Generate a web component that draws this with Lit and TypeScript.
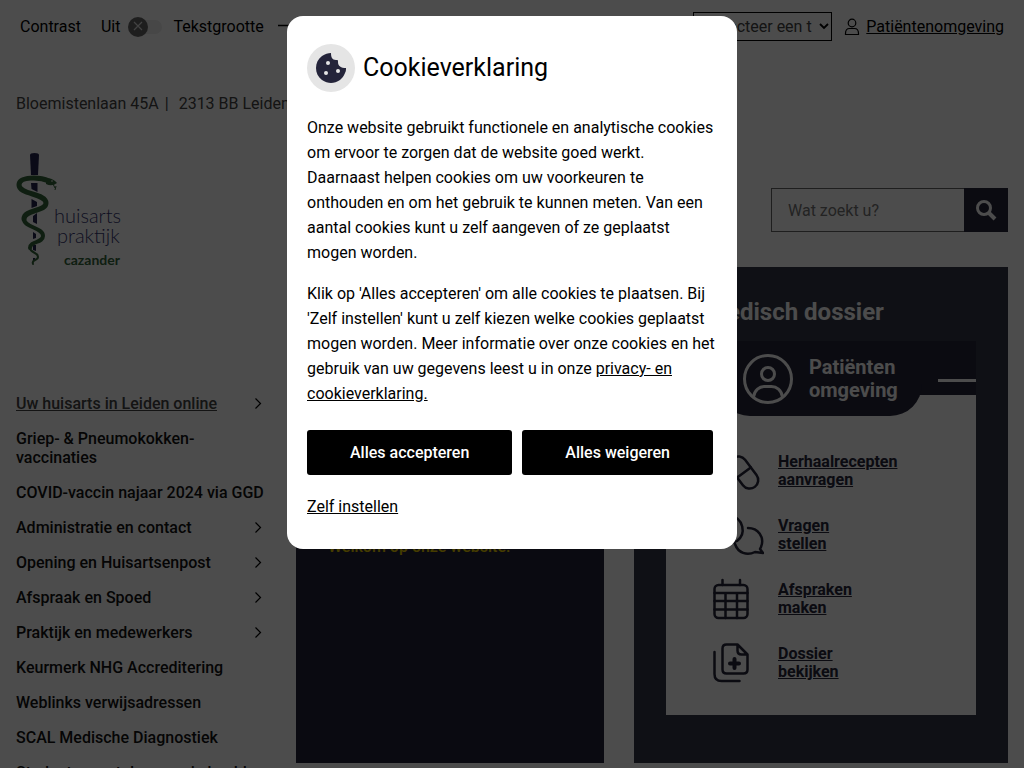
import { LitElement, html, css, svg, nothing } from "lit";
import { customElement } from "lit/decorators.js";

const menu: { label: string; sub?: boolean; active?: boolean }[] = [
  { label: "Uw huisarts in Leiden online", sub: true, active: true },
  { label: "Griep- & Pneumokokken-vaccinaties" },
  { label: "COVID-vaccin najaar 2024 via GGD" },
  { label: "Administratie en contact", sub: true },
  { label: "Opening en Huisartsenpost", sub: true },
  { label: "Afspraak en Spoed", sub: true },
  { label: "Praktijk en medewerkers", sub: true },
  { label: "Keurmerk NHG Accreditering" },
  { label: "Weblinks verwijsadressen" },
  { label: "SCAL Medische Diagnostiek" },
  { label: "Studenten met de naam in beeld" },
];

const pill = svg`<g transform="rotate(-37 32 22.5)"><rect x="23.5" y="4.5" width="17" height="36" rx="8.5"/><path d="M23.5 22.5h17"/></g>`;
const chat = svg`<path d="M19 2a14 14 0 0 1 6 25q-6 3-12 1l-8 1 2-6A14 14 0 0 1 19 2z"/><path d="M36 14c10 0 17 9 13 19q-1 2-1 2l3 4-8-1c-8 4-17 1-20-8"/>`;
const calendar = svg`<rect x="2.5" y="7" width="33" height="33" rx="4"/><path d="M10.500 2v5M28 2v5M2.500 15h33M2.500 23h33M2.500 31.500h33M13.500 15v25M25 15v25"/>`;
const dossier = svg`<path d="M2.500 10v22q0 7 7 7h18M14.500 2.500h11l10 10v15q0 4-4 4h-17q-4 0-4-4v-21q0-4 4-4zM25.500 2.500v6q0 4 4 4h6"/><path d="M22.500 17v9M18 21.500h9" stroke-width="4"/>`;

const services = [
  { icon: pill, first: "Herhaalrecepten", second: "aanvragen" },
  { icon: chat, first: "Vragen", second: "stellen" },
  { icon: calendar, first: "Afspraken", second: "maken" },
  { icon: dossier, first: "Dossier", second: "bekijken" },
];

@customElement("top-bar")
class TopBar extends LitElement {
  static styles = css`
    :host { display: block; color: #000; }
    .bar { display: flex; justify-content: space-between; align-items: center; height: 53px; padding: 0 20px; }
    .group { display: flex; align-items: center; }
    .contrast { display: flex; align-items: center; gap: 20px; }
    .switch { display: flex; align-items: center; gap: 8px; margin-right: 11px; }
    .toggle { appearance: none; width: 34px; height: 14px; margin: 0; border-radius: 7px; background: #eee; }
    .track { display: grid; align-items: center; }
    .track > * { grid-area: 1 / 1; }
    .knob { width: 20px; height: 20px; border-radius: 10px; background: #666; pointer-events: none; }
    .knob svg { display: block; }
    .size { display: flex; align-items: center; gap: 14px; }
    .size button { border: 0; padding: 0; background: none; font: inherit; line-height: 20px; }
    .language { box-sizing: border-box; width: 139px; height: 29px; padding: 0 19px 0 12px; border: 1px solid #000; border-radius: 0; background: #fff; color: #444; font: 16px Roboto, sans-serif; appearance: none; }
    .select { display: grid; align-items: center; margin-right: 12px; }
    .select > * { grid-area: 1 / 1; }
    .select svg { justify-self: end; margin-right: 3px; pointer-events: none; }
    .portal { display: flex; align-items: center; gap: 6px; color: #000; text-decoration: none; }
    .portal svg { display: block; }
    .portal span { text-decoration: underline; }
  `;
  render() {
    return html`<div class="bar">
      <div class="group">
        <div class="contrast">
          <span>Contrast</span>
          <label class="switch">Uit
            <span class="track"><input class="toggle" type="checkbox" /><span class="knob"><svg width="20" height="20" fill="none" stroke="#ddd" stroke-width="1.200"><path d="M6 5l8 8M14 5l-8 8" /></svg></span></span>
          </label>
        </div>
        <div class="size"><span>Tekstgrootte</span><button aria-label="Kleiner"><svg width="14" height="14" stroke="#000" stroke-width="1.500"><path d="M0 7.500h14" /></svg></button></div>
      </div>
      <div class="group">
        <div class="select">
          <select class="language" aria-label="Taal"><option>Selecteer een taal</option></select>
          <svg width="10" height="7" fill="none" stroke="#000" stroke-width="1.800"><path d="M1 1l4 4 4-4" /></svg>
        </div>
        <a class="portal" href="#">
          <svg width="16" height="18" fill="none" stroke="#000" stroke-width="1.200"><circle cx="8" cy="5" r="3.800" /><path d="M1.500 16.500v-1q0-5 4-5h5q4 0 4 5v1z" /></svg>
          <span>Patiëntenomgeving</span>
        </a>
      </div>
    </div>`;
  }
}

@customElement("practice-logo")
class PracticeLogo extends LitElement {
  static styles = css`
    :host { display: block; }
    svg { display: block; }
    .name { font: 300 20px Lato, sans-serif; fill: #35356f; }
    .owner { font: 700 14px Lato, sans-serif; fill: #34663a; }
  `;
  render() {
    return html`<svg width="110" height="116" viewBox="0 0 110 116" role="img" aria-label="Huisartspraktijk Cazander">
      <g fill="#22224f">
        <path d="M14 3q0-2 4.500-2t4.500 2l-1 20h-7z" />
        <path d="M15 31h6.500v9l-6-3zM15.500 47l5.500 3v4l-5.500 2zM17 64l4-3v11l-4-2zM17 80l3 2v4l-3 1zM17 93h3v6l-3-1zM17 106h2v3h-2z" />
      </g>
      <g fill="none" stroke="#34663a" stroke-linecap="round">
        <path d="M33 29C24 25 3 24 3 33C3 43 30 41 30 51C30 60 8 57 8 67" stroke-width="5" />
        <path d="M8 67C8 76 27 75 27 84C27 91 14 89 14 96" stroke-width="4" />
        <path d="M14 96C14 101 22 100 22 105C22 109 15 107 17 112" stroke-width="2" />
      </g>
      <path d="M30 27q6-2 11 4-5 4-11 1z" fill="#34663a" />
      <path d="M37 32l2 4M40 34l-1 4" stroke="#34663a" />
      <circle cx="36" cy="29" r="0.800" fill="#fff" />
      <text class="name" x="38" y="71">huisarts</text>
      <text class="name" x="41" y="91">praktijk</text>
      <text class="owner" x="48" y="113">cazander</text>
    </svg>`;
  }
}

@customElement("side-menu")
class SideMenu extends LitElement {
  static styles = css`
    :host { display: block; }
    .list { list-style: none; margin: 0; padding: 0; }
    .item { display: flex; align-items: center; justify-content: space-between; padding: 8px 0; }
    .link { color: #111; font-weight: 500; line-height: 19px; text-decoration: none; }
    .active { color: #444; text-decoration: underline; }
    .arrow { flex: none; margin-right: 4px; }
  `;
  render() {
    return html`<nav><ul class="list">${menu.map((m) => html`<li class="item">
      <a class="link ${m.active ? "active" : ""}" href="#">${m.label}</a>
      ${m.sub ? html`<svg class="arrow" width="8" height="12" fill="none" stroke="#000" stroke-width="1.200"><path d="M1.500 0.500l5 5-5 5" /></svg>` : nothing}
    </li>`)}</ul></nav>`;
  }
}

@customElement("dossier-panel")
class DossierPanel extends LitElement {
  static styles = css`
    :host { display: block; }
    .panel { background: #323848; padding: 29px 32px 48px; }
    .title { margin: 0 0 13px; padding: 0 40px; color: #fff; font-size: 24px; line-height: 32px; font-weight: 700; }
    .card { background: #fff; }
    .band { background: #25253a; height: 54px; display: flex; align-items: flex-start; justify-content: space-between; }
    .badge { box-sizing: border-box; display: flex; align-items: center; gap: 15px; height: 75px; padding: 0 24px; margin-left: 52px; background: #25253a; border-radius: 0 0 32px 32px; color: #fff; font-size: 20px; line-height: 23px; font-weight: 700; }
    .line { width: 38px; height: 3px; margin-top: 38px; background: #fff; }
    .services { list-style: none; margin: 0; padding: 53px 16px 29px 46px; display: grid; gap: 18px; }
    .service { color: #25253a; font-weight: 700; font-size: 16px; line-height: 18px; display: flex; align-items: center; gap: 14px; height: 46px; }
    .service svg { flex: none; }
  `;
  render() {
    return html`<section class="panel">
      <h2 class="title">Medisch dossier</h2>
      <div class="card">
        <div class="band">
          <div class="badge">
            <svg width="52" height="52" fill="none" stroke="#fff" stroke-width="3"><circle cx="26" cy="26" r="23.500" /><circle cx="26" cy="21" r="6.500" /><path d="M11.500 44c1-7 6-10.500 11-10.500h7c5 0 10 3.500 11 10.500" /></svg>
            <span>Patiënten<br />omgeving</span>
          </div>
          <span class="line"></span>
        </div>
        <ul class="services">${services.map((s) => html`<li>
          <a class="service" href="#">
            <svg width="52" height="42" fill="none" stroke="#25253a" stroke-width="2.500" stroke-linecap="round" stroke-linejoin="round">${s.icon}</svg>
            <span>${s.first}<br />${s.second}</span>
          </a></li>`)}</ul>
      </div>
    </section>`;
  }
}

@customElement("cookie-dialog")
class CookieDialog extends LitElement {
  static styles = css`
    :host { position: absolute; inset: 0; display: flex; justify-content: center; align-items: flex-start; padding: 16px; background: rgba(0, 0, 0, 0.7); }
    .dialog { box-sizing: border-box; width: 100%; max-width: 450px; padding: 28px 20px 30px; border-radius: 16px; background: #fff; color: #000; }
    .head { display: flex; align-items: center; gap: 8px; }
    .icon { display: grid; place-items: center; width: 48px; height: 48px; border-radius: 24px; background: #e5e5e5; }
    .title { margin: 0; font-size: 25px; line-height: 32px; font-weight: 400; }
    .text { margin: 0; line-height: 25px; }
    .copy { display: grid; gap: 16px; margin: 23px 0 24px; }
    .actions { display: flex; gap: 10px; }
    .button { height: 45px; padding: 0 43px; border: 0; border-radius: 3px; background: #000; color: #fff; font: 500 16px Roboto, sans-serif; white-space: nowrap; }
    .settings { display: block; margin-top: 20px; padding: 0; border: 0; background: none; color: #000; font: inherit; line-height: 24px; text-decoration: underline; }
    a { color: inherit; }
  `;
  render() {
    return html`<section class="dialog" role="dialog" aria-labelledby="title">
      <div class="head">
        <span class="icon"><svg width="30" height="30"><path fill="#24243a" d="M15 0c0 4 1 7 5 7 2 0 2 0 2 2 0 4 3 6 8 6 0 2 0 3-1 5-1 3-3 5-5 7-3 2-6 3-9 3s-6-1-9-3c-4-3-6-7-6-12S2 6 6 3c3-2 6-3 9-3z" /><g fill="#e5e5e5"><circle cx="12" cy="10" r="2" /><circle cx="10" cy="20" r="2" /><circle cx="22" cy="18" r="2" /></g></svg></span>
        <h1 class="title" id="title">Cookieverklaring</h1>
      </div>
      <div class="copy">
        <p class="text">Onze website gebruikt functionele en analytische cookies om ervoor te zorgen dat de website goed werkt. Daarnaast helpen cookies om uw voorkeuren te onthouden en om het gebruik te kunnen meten. Van een aantal cookies kunt u zelf aangeven of ze geplaatst mogen worden.</p>
        <p class="text">Klik op 'Alles accepteren' om alle cookies te plaatsen. Bij 'Zelf instellen' kunt u zelf kiezen welke cookies geplaatst mogen worden. Meer informatie over onze cookies en het gebruik van uw gegevens leest u in onze <a href="#">privacy- en cookieverklaring.</a></p>
      </div>
      <div class="actions"><button class="button">Alles accepteren</button><button class="button">Alles weigeren</button></div>
      <button class="settings">Zelf instellen</button>
    </section>`;
  }
}

@customElement("app-root")
class AppRoot extends LitElement {
  static styles = css`
    :host { display: block; position: relative; height: 100vh; overflow: hidden; background: #fff; color: #333; font: 16px/20px Roboto, sans-serif; }
    .address { display: flex; gap: 6px; padding: 41px 16px 0; color: #444; }
    .city { padding-left: 4px; }
    .header { display: flex; justify-content: space-between; align-items: flex-start; padding: 38px 16px 0; }
    .search { display: flex; margin-top: 36px; width: 237px; height: 44px; }
    .field { box-sizing: border-box; flex: 1; min-width: 0; padding: 0 16px; border: 1px solid #666; border-right: 0; border-radius: 0; font: 16px Roboto, sans-serif; }
    .field::placeholder { color: #757575; opacity: 1; }
    .go { display: grid; place-items: center; width: 44px; padding: 0; border: 0; background: #25253a; }
    .columns { display: grid; grid-template-columns: 250fr 308fr 374fr; gap: 30px; padding: 0 16px; margin-top: -1px; }
    .menu { margin-top: 119px; height: 0; }
    .welcome { background: #232339; padding: 269px 32px 0; color: #e6c800; font-weight: 500; }
    .welcome p { margin: 0; line-height: 22px; }
  `;
  render() {
    return html`
      <top-bar></top-bar>
      <div class="address"><span>Bloemistenlaan 45A</span><span>|</span><span class="city">2313 BB Leiden</span></div>
      <header class="header">
        <practice-logo></practice-logo>
        <form class="search">
          <input class="field" type="search" aria-label="Zoeken" placeholder="Wat zoekt u?" />
          <button class="go" type="button" aria-label="Zoek"><svg width="22" height="22" fill="none" stroke="#fff" stroke-width="3"><circle cx="9" cy="9" r="6.500" /><path d="M13.500 13.500l6.500 6.500" stroke-width="4" /></svg></button>
        </form>
      </header>
      <main class="columns">
        <side-menu class="menu"></side-menu>
        <section class="welcome"><p>Welkom op onze website!</p></section>
        <dossier-panel></dossier-panel>
      </main>
      <cookie-dialog></cookie-dialog>`;
  }
}
